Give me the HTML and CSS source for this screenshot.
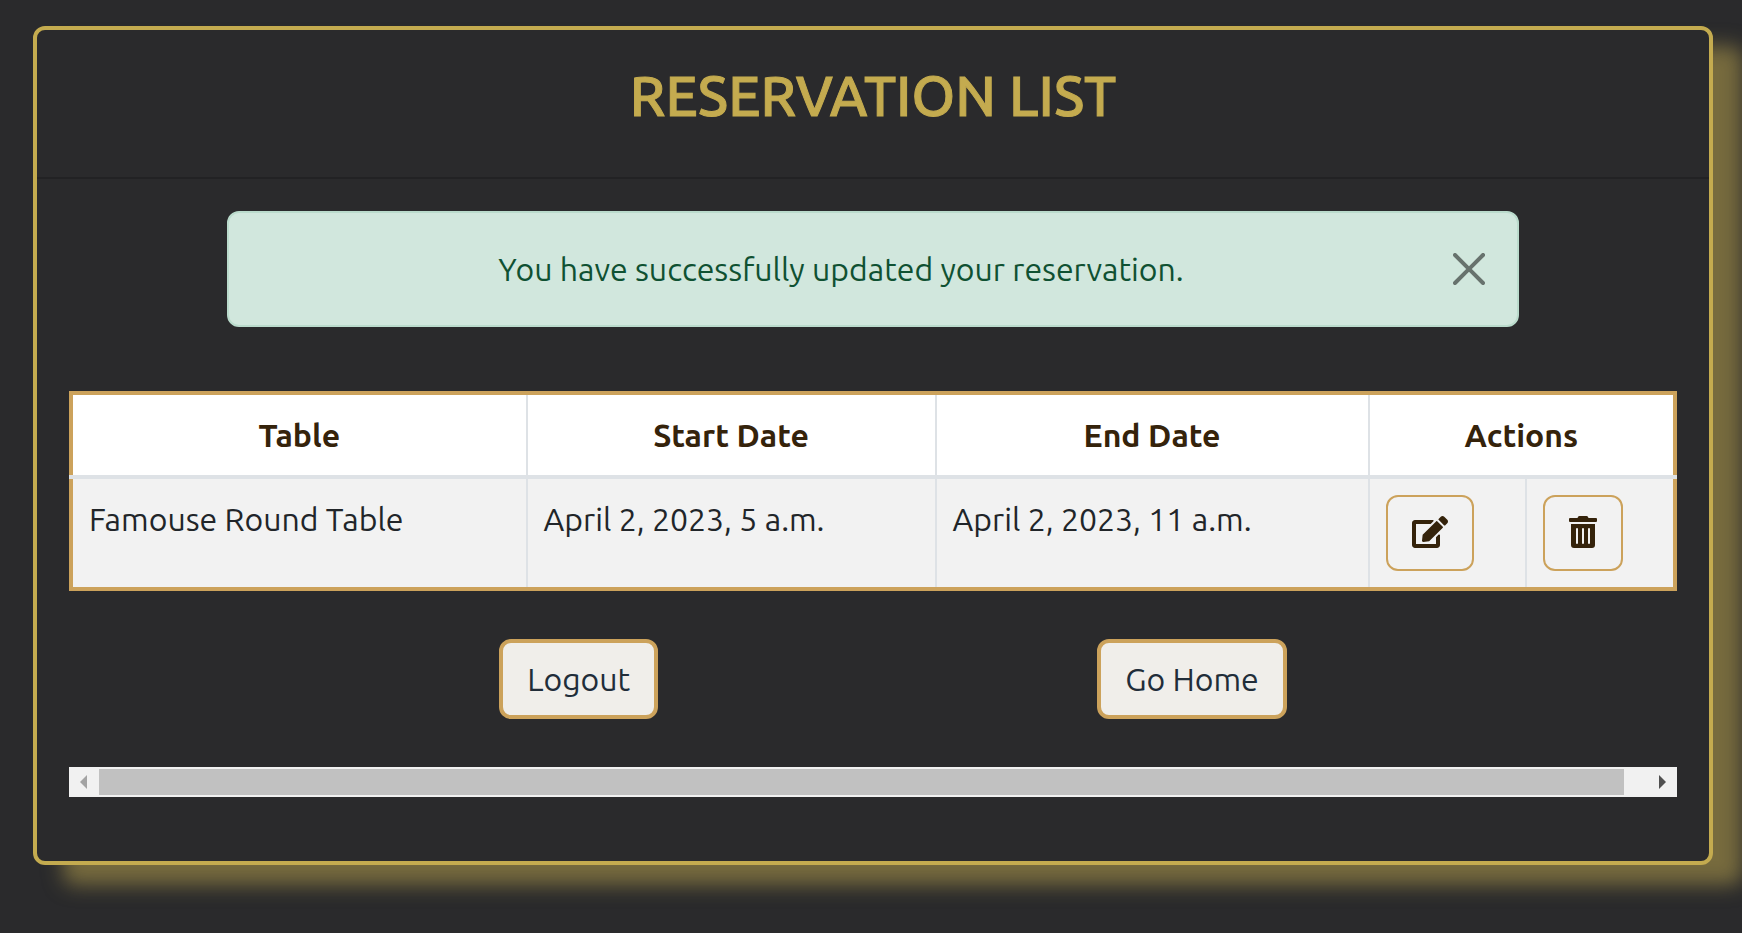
FILE: index.html
```html
<!DOCTYPE html>
<html lang="en">
<head>
<meta charset="utf-8">
<meta name="viewport" content="width=device-width, initial-scale=1">
<title>Reservation List</title>
<link rel="stylesheet" href="styles.css">
</head>
<body>
<main class="card">
  <header class="card-header">
    <h1 class="card-title">RESERVATION LIST</h1>
  </header>
  <div class="card-body">
    <div class="alert-row">
      <div class="alert" role="alert">
        <p class="alert-text">You have successfully updated your reservation.</p>
        <button class="alert-close" type="button" aria-label="Close">
          <svg class="close-icon" viewBox="0 0 16 16" aria-hidden="true"><path d="M.293.293a1 1 0 0 1 1.414 0L8 6.586 14.293.293a1 1 0 1 1 1.414 1.414L9.414 8l6.293 6.293a1 1 0 0 1-1.414 1.414L8 9.414l-6.293 6.293a1 1 0 0 1-1.414-1.414L6.586 8 .293 1.707a1 1 0 0 1 0-1.414z"/></svg>
        </button>
      </div>
    </div>
    <table class="reservations">
      <colgroup>
        <col class="col-table"><col class="col-start"><col class="col-end"><col class="col-edit"><col class="col-delete">
      </colgroup>
      <thead>
        <tr>
          <th scope="col">Table</th>
          <th scope="col">Start Date</th>
          <th scope="col">End Date</th>
          <th scope="colgroup" colspan="2">Actions</th>
        </tr>
      </thead>
      <tbody>
        <tr>
          <td>Famouse Round Table</td>
          <td>April 2, 2023, 5 a.m.</td>
          <td>April 2, 2023, 11 a.m.</td>
          <td>
            <button class="icon-button" type="button" aria-label="Edit reservation">
              <svg class="icon" viewBox="0 0 576 512" aria-hidden="true"><path d="M402.6 83.2l90.2 90.2c3.8 3.8 3.8 10 0 13.8L274.4 405.6l-92.8 10.3c-12.4 1.4-22.9-9.1-21.5-21.5l10.3-92.8L388.8 83.2c3.8-3.8 10-3.8 13.8 0zm162-22.9l-48.8-48.8c-15.2-15.2-39.9-15.2-55.2 0l-35.4 35.4c-3.8 3.8-3.8 10 0 13.8l90.2 90.2c3.8 3.8 10 3.8 13.8 0l35.4-35.4c15.2-15.3 15.2-40 0-55.2zM384 346.2V448H64V128h229.8c3.2 0 6.2-1.3 8.5-3.5l40-40c7.6-7.6 2.2-20.5-8.5-20.5H48C21.5 64 0 85.5 0 112v352c0 26.5 21.5 48 48 48h352c26.5 0 48-21.5 48-48V306.2c0-10.7-12.9-16-20.5-8.5l-40 40c-2.2 2.3-3.5 5.3-3.5 8.5z"/></svg>
            </button>
          </td>
          <td>
            <button class="icon-button" type="button" aria-label="Delete reservation">
              <svg class="icon" viewBox="0 0 448 512" aria-hidden="true"><path d="M32 464a48 48 0 0 0 48 48h288a48 48 0 0 0 48-48V128H32zm272-256a16 16 0 0 1 32 0v224a16 16 0 0 1-32 0zm-96 0a16 16 0 0 1 32 0v224a16 16 0 0 1-32 0zm-96 0a16 16 0 0 1 32 0v224a16 16 0 0 1-32 0zM432 32H312l-9.4-18.7A24 24 0 0 0 281.1 0H166.8a23.72 23.72 0 0 0-21.4 13.3L136 32H16A16 16 0 0 0 0 48v32a16 16 0 0 0 16 16h416a16 16 0 0 0 16-16V48a16 16 0 0 0-16-16z"/></svg>
            </button>
          </td>
        </tr>
      </tbody>
    </table>
    <nav class="links">
      <a class="link-button" href="#logout">Logout</a>
      <a class="link-button" href="#home">Go Home</a>
    </nav>
    <div class="scrollbar" aria-hidden="true">
      <svg class="scroll-arrow scroll-arrow-start" viewBox="0 0 30 30"><path d="M18 8v14l-7-7z"/></svg>
      <div class="scroll-track"><div class="scroll-thumb"></div></div>
      <svg class="scroll-arrow scroll-arrow-end" viewBox="0 0 30 30"><path d="M12 8v14l7-7z"/></svg>
    </div>
  </div>
</main>
</body>
</html>
```
FILE: styles.css
```css
:root {
  --page: #2a2a2c;
  --gold: #c4ab4f;
  --tan: #cca25b;
  --line: #dee2e6;
  --brown: #35230b;
}

* {
  box-sizing: border-box;
}

body {
  margin: 0;
  padding: 26px 29px 68px 33px;
  background: var(--page);
  color: #212529;
  font-family: Ubuntu, "Noto Sans", sans-serif;
  font-size: 32px;
  line-height: 48px;
  overflow-x: hidden;
}

.card {
  background: var(--page);
  border: 4px solid var(--gold);
  border-radius: 12px;
  box-shadow: 30px 20px 20px rgba(196, 171, 79, 0.5);
}

.card-header {
  padding: 32px 32px 48px;
  border-bottom: 2px solid #222224;
}

.card-title {
  margin: 0;
  color: var(--gold);
  font-size: 56px;
  font-weight: 500;
  line-height: 67px;
  text-align: center;
  -webkit-text-stroke: 1px var(--gold);
}

.card-body {
  padding: 32px 32px 64px;
}

.alert-row {
  display: grid;
  grid-template-columns: 1fr 10fr 1fr;
}

.alert {
  grid-column: 2;
  display: flex;
  align-items: center;
  margin: 0 24px 64px;
  padding: 32px;
  background: #d1e7dd;
  border: 2px solid #badbcc;
  border-radius: 12px;
  color: #0f5132;
}

.alert-text {
  flex: 1;
  margin: 0;
  padding-right: 32px;
  text-align: center;
}

.alert-close {
  display: flex;
  padding: 0;
  border: 0;
  background: none;
  opacity: 0.5;
}

.close-icon {
  width: 32px;
  height: 32px;
}

.reservations {
  width: 100%;
  table-layout: fixed;
  border-collapse: collapse;
  border: 4px solid var(--tan);
  background: #fff;
}

.col-table { width: 28.4%; }
.col-start { width: 25.5%; }
.col-end { width: 27%; }
.col-edit { width: 9.8%; }
.col-delete { width: 9.3%; }

.reservations th,
.reservations td {
  padding: 16px;
  border-left: 2px solid var(--line);
  border-right: 2px solid var(--line);
  vertical-align: top;
}

.reservations th {
  color: var(--brown);
  font-weight: 700;
  text-align: center;
}

.reservations tbody {
  border-top: 4px solid var(--line);
}

.reservations td {
  background: #f2f2f2;
}

.icon-button {
  display: flex;
  align-items: center;
  height: 76px;
  padding: 0 24px 2px;
  border: 2px solid var(--tan);
  border-radius: 12px;
  background: none;
  color: var(--brown);
}

.icon {
  height: 32px;
  fill: currentColor;
}

.links {
  display: flex;
  justify-content: center;
  gap: 28%;
  padding: 48px 0 48px 40px;
}

.link-button {
  padding: 12px 24px;
  border: 4px solid var(--tan);
  border-radius: 12px;
  background: #f0eeea;
  color: #212d39;
  text-decoration: none;
}

.scrollbar {
  display: flex;
  height: 30px;
  background: #f1f1f1;
}

.scroll-arrow {
  width: 30px;
  height: 30px;
}

.scroll-arrow-start { fill: #a3a3a3; }
.scroll-arrow-end { fill: #505050; }

.scroll-track {
  flex: 1;
  padding: 2px 0;
}

.scroll-thumb {
  width: 98.5%;
  height: 100%;
  background: #c1c1c1;
}
```
